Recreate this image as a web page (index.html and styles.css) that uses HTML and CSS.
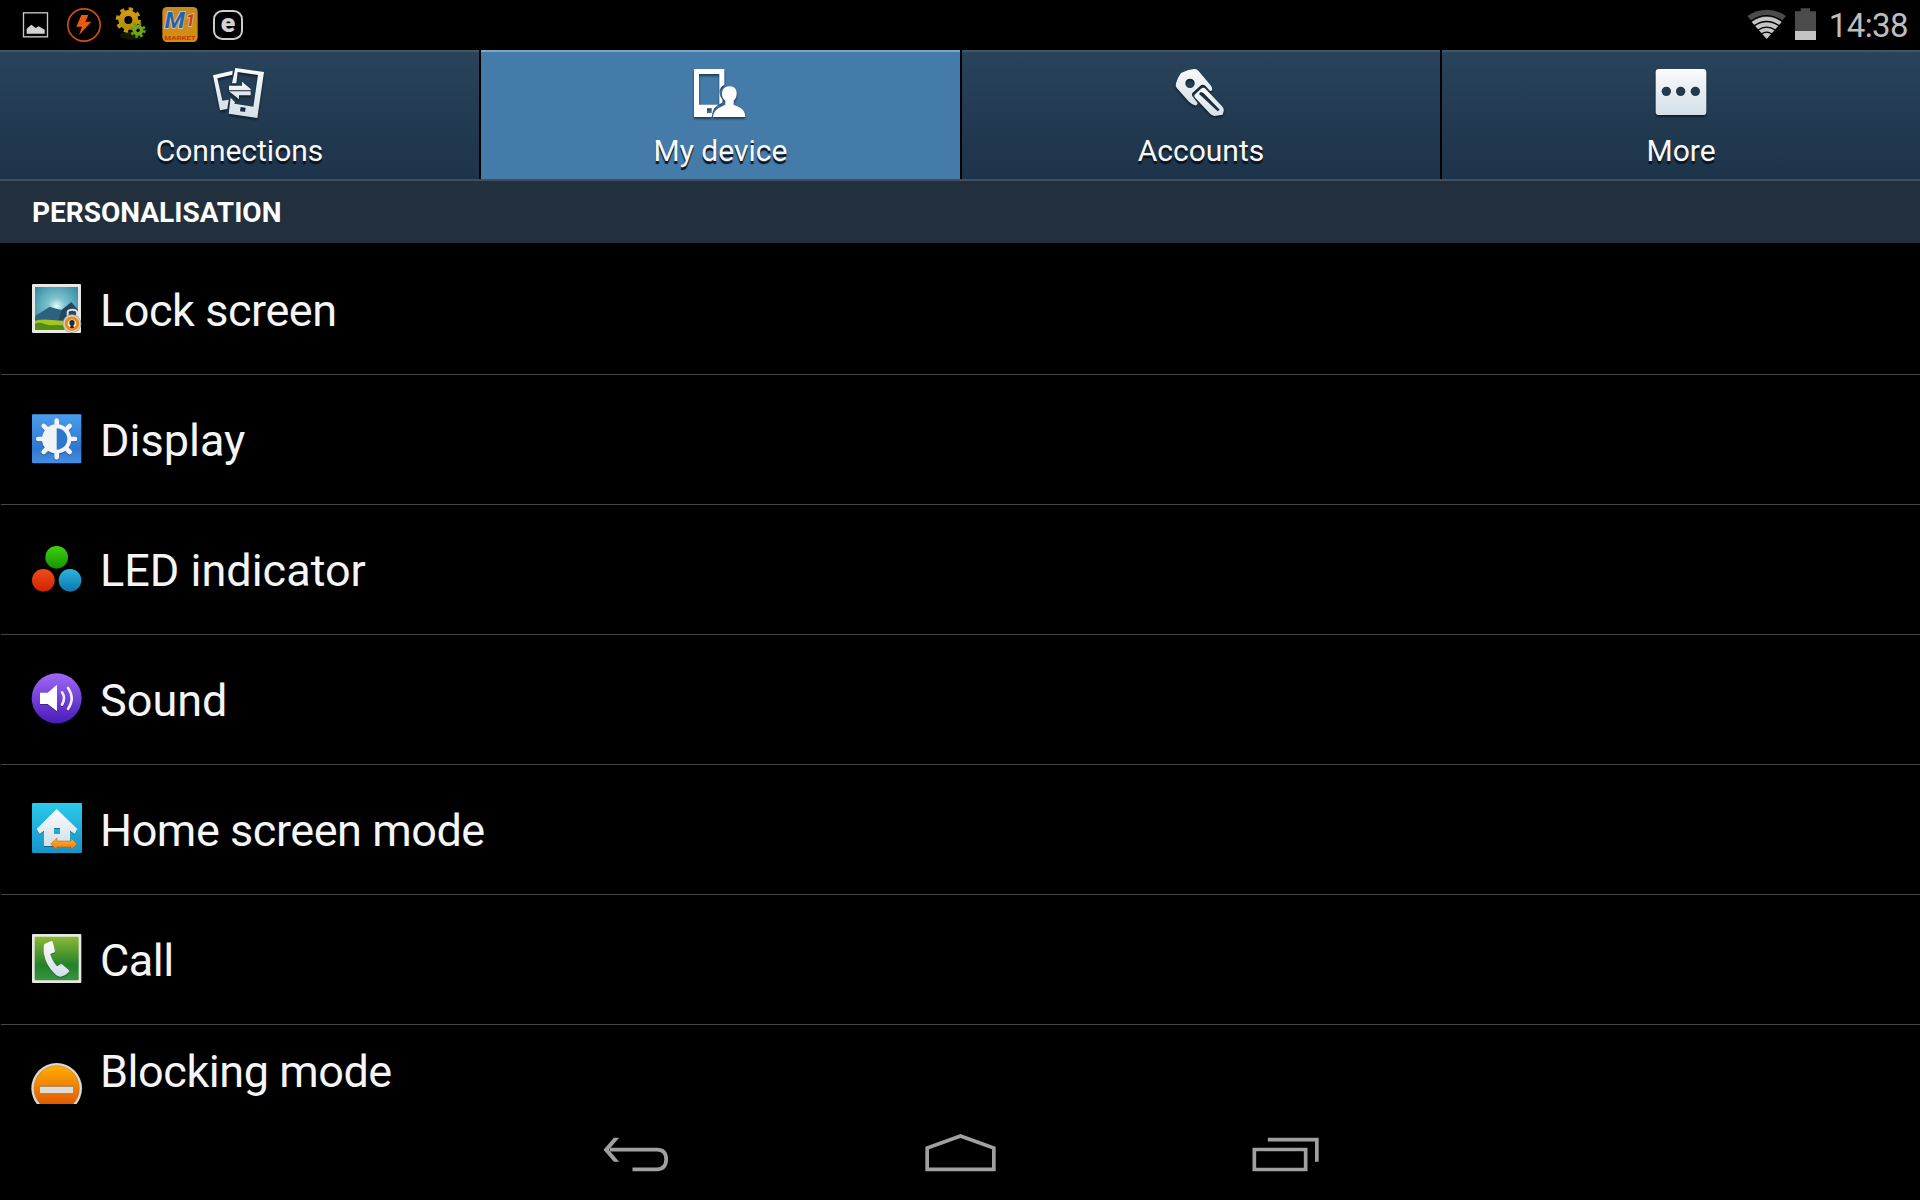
FILE: index.html
```html
<!DOCTYPE html>
<html lang="en">
<head>
    <meta charset="UTF-8">
    <meta name="viewport" content="width=device-width, initial-scale=1.0">
    <title>Settings</title>
    <link rel="stylesheet" href="styles.css">
</head>
<body>
    <header class="status-bar">
        <div class="notifications">
            <svg viewBox="48 15 120 120">
                <rect x="70.500" y="38.500" width="72" height="72" fill="none" stroke="#c9c9c9" stroke-width="4"/>
                <path d="M80 101V86L94 74l13 10 9-5 18 10v12z" fill="#d2d2d2"/>
            </svg>
            <svg viewBox="192 15 120 120">
                <circle cx="252" cy="75" r="48.500" fill="none" stroke="#c9500f" stroke-width="5"/>
                <path d="M244 45h21l-9 20h18l-37 40 9-25h-17z" fill="#e65c10"/>
            </svg>
            <svg viewBox="336 15 120 120">
                <defs>
                    <linearGradient id="gearYellow" x1="0" y1="0" x2="0" y2="1">
                        <stop offset="0" stop-color="#d39a10"/><stop offset="1" stop-color="#a9930c"/>
                    </linearGradient>
                </defs>
                <ellipse cx="396" cy="107" rx="36" ry="12" fill="#1d2b04" opacity=".6"/>
                <circle cx="385" cy="60" r="21" fill="none" stroke="url(#gearYellow)" stroke-width="18"/>
                <circle cx="385" cy="60" r="33" fill="none" stroke="#c8960f" stroke-width="10" stroke-dasharray="12.960 12.960"/>
                <circle cx="414" cy="91" r="11" fill="none" stroke="#72a517" stroke-width="11"/>
                <circle cx="414" cy="91" r="19" fill="none" stroke="#6c9e15" stroke-width="8" stroke-dasharray="7.460 7.460"/>
            </svg>
            <svg viewBox="480 15 120 120">
                <defs>
                    <linearGradient id="market" x1="0" y1="0" x2="0" y2="1">
                        <stop offset="0" stop-color="#c58a25"/><stop offset="1" stop-color="#d98c0c"/>
                    </linearGradient>
                </defs>
                <rect x="487" y="21" width="106" height="105" rx="14" fill="url(#market)"/>
                <g class="market-logo">
                    <text x="494" y="85" font-size="64" textLength="60" lengthAdjust="spacingAndGlyphs" fill="#1f63ae">M</text>
                    <text x="557" y="79" font-size="50" fill="#c13b1c">1</text>
                </g>
                <text class="market-name" x="493" y="119" font-size="17" textLength="94" lengthAdjust="spacingAndGlyphs">MARKET</text>
            </svg>
            <svg viewBox="624 15 120 120">
                <rect x="642" y="33" width="84" height="84" rx="25" fill="none" stroke="#cdcdcd" stroke-width="6"/>
                <text class="letter-e" x="684" y="96" font-size="80" text-anchor="middle">e</text>
            </svg>
        </div>
        <div class="system">
            <svg class="wifi" viewBox="81 24 120 96">
                <path d="M140 117L82 48Q140 10 198 48z" fill="#4b4b4b"/>
                <path d="M140 117L95 66Q140 34 185 66z" fill="#c4c4c4"/>
                <path d="M92 64Q140 30 188 64M103 77q37-25 74 0M114 90q26-17 52 0M124 102q16-11 32 0" fill="none" stroke="#000" stroke-width="4"/>
            </svg>
            <svg class="battery" viewBox="225 24 63 96">
                <path d="M225 34h17v-9h28v9h18v59h-63z" fill="#4b4b4b"/>
                <path d="M225 93h63v27h-63z" fill="#c4c4c4"/>
            </svg>
            <span class="clock">14:38</span>
        </div>
    </header>

    <nav class="tabs">
        <a class="tab">
            <svg viewBox="216 75 165 165">
                <path fill="url(#silver)" fill-rule="evenodd" d="M219 106l59-14-1 12-45 11 15 67 19-3-4 28-22 4z"/>
                <path fill="url(#silver)" fill-rule="evenodd" d="M286 84l86 12-20 138-86-13 6-48 13 14-2 4 57 9 14-95-61-9-4 34h-13zM302 201l-2 13 15 2 2-13z"/>
                <path fill="url(#silver)" d="M267 137h39v-12l26 22v4h-65zM332 154v12h-35v12l-30-24z"/>
            </svg>
            <span>Connections</span>
        </a>
        <a class="tab active">
            <svg viewBox="159 75 165 165">
                <path fill="#fff" fill-rule="evenodd" d="M162 87h91v48q-15 5-14 22 0 14 8 21v10q-29 8-32 43h-53zM177 102v92h58l3-2v-90zM201 205v14h14v-14z"/>
                <path fill="#fff" d="M268 139c15 0 23 9 22 23-1 10-4 16-9 20v12c17 8 34 11 35 37h-97c3-26 22-28 37-37v-12c-6-4-10-11-10-20 0-14 8-23 22-23z"/>
            </svg>
            <span>My device</span>
        </a>
        <a class="tab">
            <svg viewBox="160 75 165 165">
                <path fill="url(#silver)" fill-rule="evenodd" d="M181 99q20-10 39-12 8-1 13 5l38 45q6 9 2 15l-5 1-14-16q-8-6-15 0l-23 21q-5 6 1 13l14 18q-1 9-9 7-9-4-17-11l-36-40q-6-8-3-15 4-16 15-31zM208 116a14 14 0 1 0 .1 0z"/>
                <path fill="url(#silver)" fill-rule="evenodd" d="M222 164l21-19q7-4 12 2l49 52q7 8 5 14l-3 11-24 4q-8-1-13-6l-45-48q-5-5-2-10zM239 157l-4 5 56 52 6-5-48-49q-6-5-10-3z"/>
            </svg>
            <span>Accounts</span>
        </a>
        <a class="tab">
            <svg viewBox="160 75 165 165">
                <rect x="165" y="87" width="152" height="138" rx="10" fill="url(#silver)"/>
                <g fill="#23384c">
                    <circle cx="197" cy="154" r="14"/>
                    <circle cx="240" cy="154" r="14"/>
                    <circle cx="284" cy="154" r="14"/>
                </g>
            </svg>
            <span>More</span>
        </a>
    </nav>

    <h2 class="category">PERSONALISATION</h2>

    <ul class="settings">
        <li>
            <svg viewBox="96 342 150 150">
                <defs>
                    <radialGradient id="sky" cx=".5" cy=".45" r=".65">
                        <stop offset="0" stop-color="#e3fbfb"/><stop offset=".3" stop-color="#7fc3cf"/><stop offset="1" stop-color="#3189a3"/>
                    </radialGradient>
                </defs>
                <rect x="96" y="342" width="147" height="147" rx="3" fill="#e9e9e4"/>
                <rect x="105" y="351" width="129" height="129" fill="url(#sky)"/>
                <path d="M105 438l14-8 30-20 14 5 22 5 29-23 20 23v35H105z" fill="#2c617f"/>
                <path d="M185 420l29-23 20 23v34h-60z" fill="#244662"/>
                <path d="M105 452q25-6 48-2l81 5v25H105z" fill="#a1c522"/>
                <path d="M105 461q15-5 27 0l15 5q20-2 45 0v14H105z" fill="#538d12"/>
                <path d="M203 440v-13q0-8 14-8t14 8v13" fill="none" stroke="#dedede" stroke-width="6"/>
                <circle cx="216" cy="461" r="28" fill="#9d9b96"/>
                <circle cx="216" cy="461" r="26" fill="#d7d2ca"/>
                <circle cx="216" cy="461" r="17" fill="#eee" stroke="#ed8b16" stroke-width="9"/>
                <circle cx="216" cy="458" r="8" fill="#252a3b"/>
                <path d="M213 460h6l3 14h-12z" fill="#252a3b"/>
            </svg>
            <span class="tight">Lock screen</span>
        </li>
        <li>
            <svg viewBox="96 41 150 150">
                <defs>
                    <linearGradient id="blue" x1="0" y1="0" x2="0" y2="1">
                        <stop offset="0" stop-color="#4a9cec"/><stop offset=".7" stop-color="#2f78d0"/><stop offset="1" stop-color="#468fe2"/>
                    </linearGradient>
                </defs>
                <rect x="96" y="42" width="148" height="147" rx="3" fill="url(#blue)"/>
                <g class="raised">
                    <path d="M170 61v24M170 147v24M115 116h24M201 116h24M131 77l16 16M193 139l16 16M131 155l16-16M193 93l16-16" stroke="#f1f3f5" stroke-width="14" stroke-linecap="round"/>
                    <circle cx="170" cy="116" r="44" fill="#f1f3f5"/>
                </g>
                <path d="M170 84a32 32 0 0 1 0 64z" fill="#2d78cf"/>
            </svg>
            <span>Display</span>
        </li>
        <li>
            <svg viewBox="96 432 150 150">
                <defs>
                    <linearGradient id="ledGreen" x1="0" y1="0" x2="0" y2="1">
                        <stop offset="0" stop-color="#41cf10"/><stop offset="1" stop-color="#169500"/>
                    </linearGradient>
                    <linearGradient id="ledRed" x1="0" y1="0" x2="0" y2="1">
                        <stop offset="0" stop-color="#f14c1c"/><stop offset="1" stop-color="#cb2500"/>
                    </linearGradient>
                    <linearGradient id="ledBlue" x1="0" y1="0" x2="0" y2="1">
                        <stop offset="0" stop-color="#2fb3df"/><stop offset="1" stop-color="#0878ae"/>
                    </linearGradient>
                </defs>
                <circle cx="170" cy="472" r="34" fill="url(#ledGreen)"/>
                <circle cx="130" cy="541" r="34" fill="url(#ledRed)"/>
                <circle cx="210" cy="541" r="34" fill="url(#ledBlue)"/>
            </svg>
            <span>LED indicator</span>
        </li>
        <li>
            <svg viewBox="96 72 150 150">
                <defs>
                    <linearGradient id="purple" x1="0" y1="0" x2="0" y2="1">
                        <stop offset="0" stop-color="#9f68f8"/><stop offset="1" stop-color="#491bb8"/>
                    </linearGradient>
                </defs>
                <circle cx="170" cy="145" r="75" fill="url(#purple)"/>
                <g class="raised">
                    <path d="M120 128h23l28-24v80l-28-22h-23z" fill="#fff"/>
                    <path d="M186 127q12 18 0 37M204 114q22 32 0 63" fill="none" stroke="#f1ecfa" stroke-width="8" stroke-linecap="round"/>
                </g>
            </svg>
            <span>Sound</span>
        </li>
        <li>
            <svg viewBox="96 462 150 150">
                <defs>
                    <linearGradient id="cyan" x1="0" y1="0" x2="0" y2="1">
                        <stop offset="0" stop-color="#2bcbea"/><stop offset="1" stop-color="#1693cb"/>
                    </linearGradient>
                    <linearGradient id="arrow" x1="0" y1="0" x2="0" y2="1">
                        <stop offset="0" stop-color="#ffb03a"/><stop offset="1" stop-color="#e9790c"/>
                    </linearGradient>
                </defs>
                <rect x="96" y="459" width="150" height="150" rx="3" fill="url(#cyan)"/>
                <path class="raised" fill="url(#silver)" fill-rule="evenodd" d="M170 477l62 60-8 15-14-10v46h-78v-46l-13 10-9-15zM162 534v18h18v-18z"/>
                <path d="M152 582l19-18v9h42v-9l18 18-18 18v-9h-42v9z" fill="url(#arrow)" stroke="#a35c14" stroke-width="1.500"/>
            </svg>
            <span class="tight">Home screen mode</span>
        </li>
        <li>
            <svg viewBox="96 72 150 150">
                <defs>
                    <linearGradient id="green" x1="0" y1="0" x2="0" y2="1">
                        <stop offset="0" stop-color="#8bb936"/><stop offset=".65" stop-color="#24812b"/><stop offset="1" stop-color="#379540"/>
                    </linearGradient>
                </defs>
                <rect x="96" y="72" width="148" height="147" rx="3" fill="#e8e8e3"/>
                <rect x="104" y="80" width="132" height="131" rx="3" fill="url(#green)"/>
                <path class="raised" fill="url(#silver)" d="M133 102l21-9q4 0 5 5l6 25q0 4-4 5l-10 4q4 19 20 37l10-6q4-2 7 1l18 16q3 4 0 7-8 10-23 13-8 1-16-6-30-27-35-62-3-20 1-30z"/>
            </svg>
            <span class="tight">Call</span>
        </li>
        <li>
            <svg viewBox="96 462 150 150">
                <defs>
                    <linearGradient id="orange" x1="0" y1="0" x2="0" y2="1">
                        <stop offset="0" stop-color="#feae05"/><stop offset="1" stop-color="#dc4c00"/>
                    </linearGradient>
                </defs>
                <circle cx="170" cy="535" r="76" fill="#dbd8d3"/>
                <circle cx="170" cy="535" r="68" fill="url(#orange)" stroke="#bd690d" stroke-width="1.500"/>
                <rect x="120" y="526" width="99" height="23" fill="#dedad5"/>
                <path d="M120 528h99" stroke="#a77238" stroke-width="4"/>
            </svg>
            <span class="tight">Blocking mode</span>
        </li>
    </ul>

    <footer class="nav-bar">
        <svg viewBox="70 100 200 120">
            <path d="M90 150h141q28 0 28 29 0 30-28 30h-73" fill="none" stroke="#a0a0a0" stroke-width="11"/>
            <path d="M71 150l31-36h16l-31 36 31 36h-16z" fill="#a0a0a0"/>
        </svg>
        <svg viewBox="1040 100 200 120">
            <path d="M1140 109l100 36v64h-200v-64z" fill="none" stroke="#a0a0a0" stroke-width="11"/>
        </svg>
        <svg class="recents" viewBox="160 100 200 120">
            <path d="M163.500 149.500h154v60h-154zM204 120h147v66" fill="none" stroke="#a0a0a0" stroke-width="11"/>
        </svg>
    </footer>

    <!-- gradient shared by the icons -->
    <svg class="shared" width="0" height="0">
        <defs>
            <linearGradient id="silver" x1="0" y1="0" x2="0" y2="1">
                <stop offset="0" stop-color="#fafbfc"/><stop offset="1" stop-color="#d3dfe8"/>
            </linearGradient>
        </defs>
    </svg>
</body>
</html>
```
FILE: styles.css
```css
* {
    box-sizing: border-box;
}
body {
    margin: 0;
    height: 1200px;
    display: flex;
    flex-direction: column;
    overflow: hidden;
    background: #000;
    color: #f5f5f5;
    font-family: Roboto, "Liberation Sans", sans-serif;
}
svg {
    display: block;
    flex: none;
    overflow: visible;
}
.shared {
    position: absolute;
}

/* status bar */
.status-bar {
    height: 50px;
    flex: none;
    display: flex;
    justify-content: space-between;
    padding: 0 12px 0 16px;
}
.notifications {
    display: flex;
    align-items: center;
    gap: 8px;
}
.notifications svg {
    width: 40px;
    height: 40px;
}
.market-logo {
    font-weight: bold;
    font-style: italic;
    stroke: #d9c7b0;
    stroke-width: 4px;
    paint-order: stroke;
}
.market-name {
    fill: #c23a10;
    font-weight: bold;
}
.letter-e {
    fill: #d2d2d2;
    font-weight: 900;
}
.system {
    display: flex;
    align-items: flex-start;
}
.wifi {
    width: 40px;
    height: 32px;
    margin: 8px 8px 0 0;
}
.battery {
    width: 21px;
    height: 32px;
    margin: 8px 13px 0 0;
}
.clock {
    font-size: 33px;
    line-height: 50px;
    letter-spacing: -0.6px;
    margin-top: 1px;
    color: #bebebe;
}

/* tabs */
.tabs {
    height: 131px;
    flex: none;
    display: grid;
    grid-template-columns: 479px 479px 478px 1fr;
    gap: 2px;
    border-bottom: 2px solid #3f4f60;
}
.tab {
    display: flex;
    flex-direction: column;
    align-items: center;
    padding-top: 13px;
    border-top: 2px solid #435564;
    background: linear-gradient(#28435a, #1d3349);
    font-size: 30px;
    line-height: 36px;
    color: #f8f8f8;
    text-shadow: 0 3px 1px #0b131b;
}
.tab svg {
    width: 55px;
    height: 55px;
    margin-bottom: 13px;
    filter: drop-shadow(0 2px 1px rgba(0, 0, 0, 0.5));
}
.tab.active {
    background: #447ba9;
    border-top-color: #7ea6c6;
}

.category {
    height: 62px;
    flex: none;
    margin: 0;
    padding-left: 32px;
    background: #22303d;
    font-size: 28px;
    line-height: 64px;
    font-weight: bold;
    color: #fff;
}

/* settings list */
.settings {
    height: 861px;
    flex: none;
    margin: 0;
    padding: 2px 0 0 1px;
    list-style: none;
    overflow: hidden;
}
.settings li {
    height: 130px;
    display: flex;
    align-items: center;
    gap: 18px;
    padding-left: 31px;
    border-bottom: 1px solid #444;
    font-size: 45px;
}
.settings li:last-child {
    height: 79px;
    border-bottom: none;
}
.settings svg {
    width: 50px;
    height: 50px;
    align-self: flex-start;
    margin-top: 39px;
}
.settings span {
    padding-top: 2px;
}
.settings li:last-child span {
    padding-top: 14px;
}
.settings .tight {
    letter-spacing: -0.45px;
}
.raised {
    filter: drop-shadow(0 3px 1px rgba(0, 0, 0, 0.35));
}

/* navigation buttons */
.nav-bar {
    flex: 1;
    display: flex;
    justify-content: center;
    gap: 257px;
    padding: 29px 0 0 3px;
}
.nav-bar svg {
    width: 67px;
    height: 40px;
}
.nav-bar .recents {
    margin-left: 2px;
}
```
